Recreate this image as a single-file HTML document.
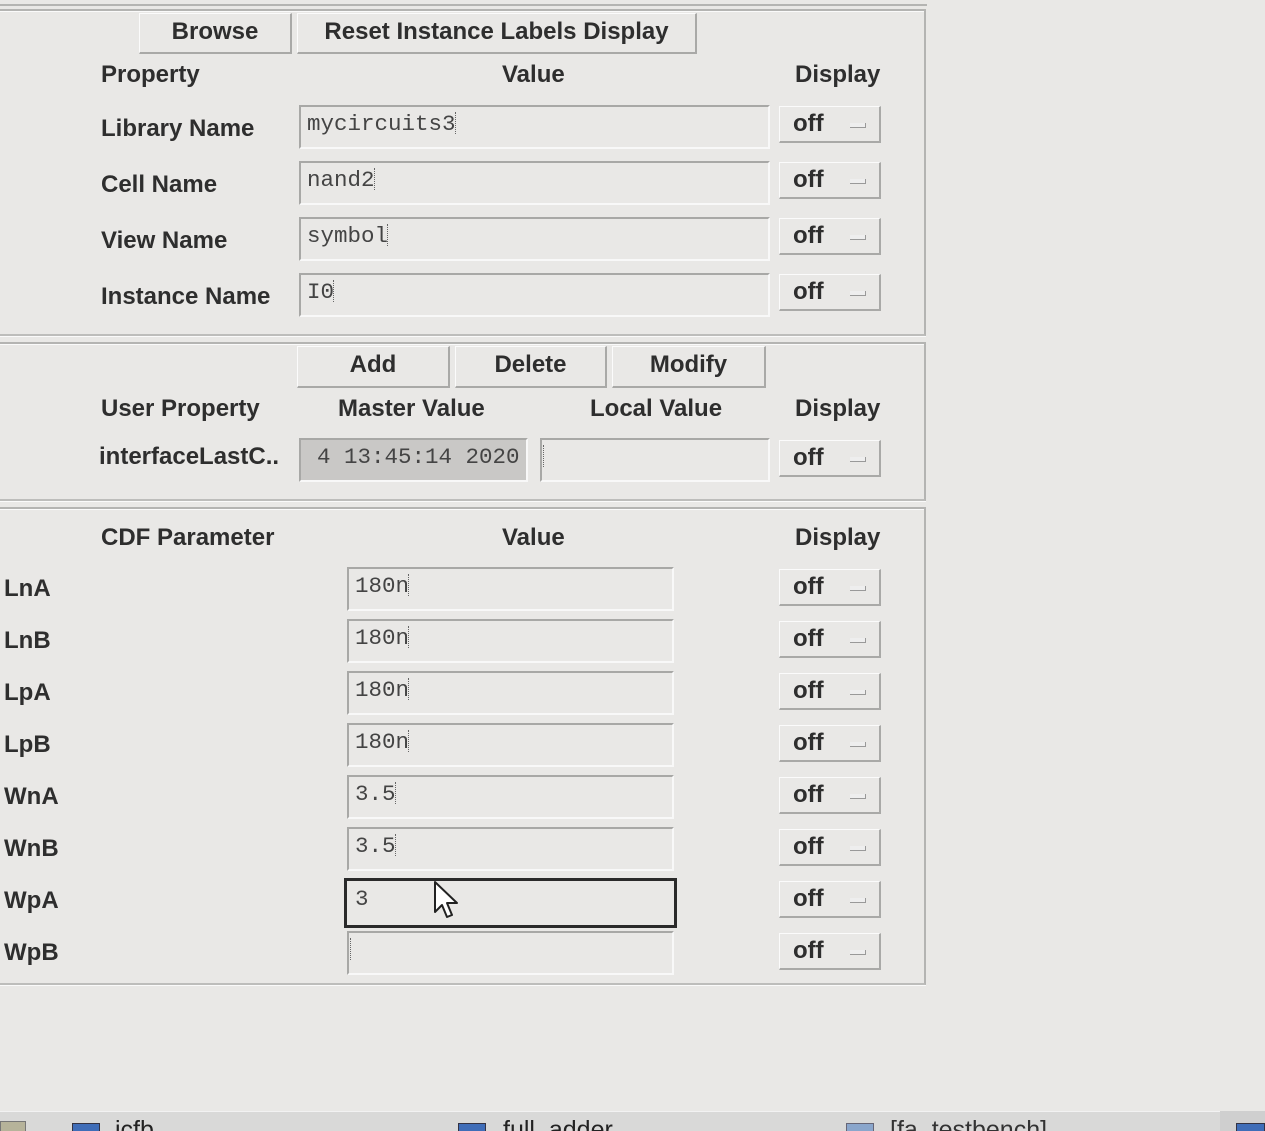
<!DOCTYPE html>
<html><head><meta charset="utf-8"><style>
*{margin:0;padding:0;box-sizing:border-box}
html,body{width:1265px;height:1131px;overflow:hidden;background:#e9e8e6;position:relative;font-family:"Liberation Sans Narrow","Liberation Sans",sans-serif}
.a{position:absolute}
.frame{position:absolute;border-top:2px solid #b4b4b2;border-right:2px solid #b4b4b2;border-bottom:2px solid #bdbdbb;box-shadow:inset 0 1px 0 #fafafa, 0 1px 0 #fafafa}
.lbl{position:absolute;font-weight:bold;font-size:24px;color:#2e2e2e;white-space:nowrap}
.btn{position:absolute;border:1px solid #fbfbfb;border-right:2px solid #a9a9a7;border-bottom:2px solid #a9a9a7;background:#e9e8e6;font-weight:bold;font-size:24px;color:#2e2e2e;text-align:center;line-height:36px}
.fld{position:absolute;border-top:2px solid #a8a8a6;border-left:2px solid #a8a8a6;border-right:2px solid #f8f8f8;border-bottom:2px solid #f8f8f8;background:#e9e8e6;font-family:"Liberation Mono",monospace;font-size:22.5px;color:#444;padding:0 0 0 6px;line-height:34px}
.off{position:absolute;width:102px;height:37px;border:1px solid #fbfbfb;border-right:2px solid #a9a9a7;border-bottom:2px solid #a9a9a7;font-weight:bold;font-size:24px;color:#2e2e2e;line-height:34px;padding-left:13px}
.off:after{content:"";position:absolute;left:70px;top:16px;width:15px;height:4px;border-right:1px solid #999;border-bottom:1px solid #999;background:#eee}
.cur{display:inline-block;width:5px;height:22px;border-left:1px dotted #666;vertical-align:-4px;margin-left:-1px}
.tb{position:absolute;top:1116px;font-family:'Liberation Sans',sans-serif;font-size:25px;color:#222}
</style></head><body>
<div class="a" style="left:0;top:0;width:927px;height:6px;border-bottom:2px solid #b4b4b2"></div>

<div class="frame" style="left:-2px;top:9px;width:928px;height:327px"></div>
<div class="btn" style="left:139px;top:13px;width:153px;height:41px">Browse</div>
<div class="btn" style="left:297px;top:13px;width:400px;height:41px">Reset Instance Labels Display</div>
<div class="lbl" style="left:101px;top:61px">Property</div>
<div class="lbl" style="left:502px;top:61px">Value</div>
<div class="lbl" style="left:795px;top:61px">Display</div>

<div class="lbl" style="left:101px;top:115px">Library Name</div>
<div class="fld" style="left:299px;top:105px;width:471px;height:44px">mycircuits3<span class="cur"></span></div>
<div class="off" style="left:779px;top:106px">off</div>
<div class="lbl" style="left:101px;top:171px">Cell Name</div>
<div class="fld" style="left:299px;top:161px;width:471px;height:44px">nand2<span class="cur"></span></div>
<div class="off" style="left:779px;top:162px">off</div>
<div class="lbl" style="left:101px;top:227px">View Name</div>
<div class="fld" style="left:299px;top:217px;width:471px;height:44px">symbol<span class="cur"></span></div>
<div class="off" style="left:779px;top:218px">off</div>
<div class="lbl" style="left:101px;top:283px">Instance Name</div>
<div class="fld" style="left:299px;top:273px;width:471px;height:44px">I0<span class="cur"></span></div>
<div class="off" style="left:779px;top:274px">off</div>

<div class="frame" style="left:-2px;top:342px;width:928px;height:159px"></div>
<div class="btn" style="left:297px;top:346px;width:153px;height:42px">Add</div>
<div class="btn" style="left:455px;top:346px;width:152px;height:42px">Delete</div>
<div class="btn" style="left:612px;top:346px;width:154px;height:42px">Modify</div>
<div class="lbl" style="left:101px;top:395px">User Property</div>
<div class="lbl" style="left:338px;top:395px">Master Value</div>
<div class="lbl" style="left:590px;top:395px">Local Value</div>
<div class="lbl" style="left:795px;top:395px">Display</div>
<div class="lbl" style="left:99px;top:443px">interfaceLastC..</div>
<div class="fld" style="left:299px;top:438px;width:229px;height:44px;background:#c9c8c6;padding-left:16px;line-height:34px">4 13:45:14 2020</div>
<div class="fld" style="left:540px;top:438px;width:230px;height:44px;padding-left:2px"><span class="cur"></span></div>
<div class="off" style="left:779px;top:440px">off</div>

<div class="frame" style="left:-2px;top:507px;width:928px;height:478px"></div>
<div class="lbl" style="left:101px;top:524px">CDF Parameter</div>
<div class="lbl" style="left:502px;top:524px">Value</div>
<div class="lbl" style="left:795px;top:524px">Display</div>

<div class="lbl" style="left:4px;top:575px">LnA</div>
<div class="fld" style="left:347px;top:567px;width:327px;height:44px">180n<span class="cur"></span></div>
<div class="off" style="left:779px;top:569px">off</div>
<div class="lbl" style="left:4px;top:627px">LnB</div>
<div class="fld" style="left:347px;top:619px;width:327px;height:44px">180n<span class="cur"></span></div>
<div class="off" style="left:779px;top:621px">off</div>
<div class="lbl" style="left:4px;top:679px">LpA</div>
<div class="fld" style="left:347px;top:671px;width:327px;height:44px">180n<span class="cur"></span></div>
<div class="off" style="left:779px;top:673px">off</div>
<div class="lbl" style="left:4px;top:731px">LpB</div>
<div class="fld" style="left:347px;top:723px;width:327px;height:44px">180n<span class="cur"></span></div>
<div class="off" style="left:779px;top:725px">off</div>
<div class="lbl" style="left:4px;top:783px">WnA</div>
<div class="fld" style="left:347px;top:775px;width:327px;height:44px">3.5<span class="cur"></span></div>
<div class="off" style="left:779px;top:777px">off</div>
<div class="lbl" style="left:4px;top:835px">WnB</div>
<div class="fld" style="left:347px;top:827px;width:327px;height:44px">3.5<span class="cur"></span></div>
<div class="off" style="left:779px;top:829px">off</div>
<div class="lbl" style="left:4px;top:887px">WpA</div>
<div class="fld" style="left:344px;top:878px;width:333px;height:50px;border:3px solid #2a2a2a;padding-left:8px;line-height:36px">3</div>
<svg class="a" style="left:433px;top:880px" width="28" height="42" viewBox="0 0 28 42"><path d="M2 2 L2 32 L9 25 L14 37 L19 35 L14 23 L24 23 Z" fill="#fff" stroke="#222" stroke-width="2" stroke-linejoin="round"/></svg>
<div class="off" style="left:779px;top:881px">off</div>
<div class="lbl" style="left:4px;top:939px">WpB</div>
<div class="fld" style="left:347px;top:931px;width:327px;height:44px;padding-left:2px"><span class="cur"></span></div>
<div class="off" style="left:779px;top:933px">off</div>

<div class="a" style="left:0;top:1111px;width:1265px;height:20px;background:#d9d9d8;border-top:1px solid #f2f2f2"></div>
<div class="a" style="left:0;top:1121px;width:26px;height:12px;background:#b6b39a;border:1px solid #777"></div>
<div class="a" style="left:72px;top:1123px;width:28px;height:10px;background:#3f6db8;border:1px solid #334"></div>
<div class="tb" style="left:115px">icfb</div>
<div class="a" style="left:458px;top:1123px;width:28px;height:10px;background:#3f6db8;border:1px solid #334"></div>
<div class="tb" style="left:503px">full_adder</div>
<div class="a" style="left:846px;top:1123px;width:28px;height:10px;background:#8aa6cc;border:1px solid #667"></div>
<div class="tb" style="left:890px;color:#333">[fa_testbench]</div>
<div class="a" style="left:1220px;top:1111px;width:45px;height:20px;background:#cfcfcf"></div>
<div class="a" style="left:1236px;top:1123px;width:29px;height:10px;background:#3f6db8;border:1px solid #334"></div>
</body></html>
